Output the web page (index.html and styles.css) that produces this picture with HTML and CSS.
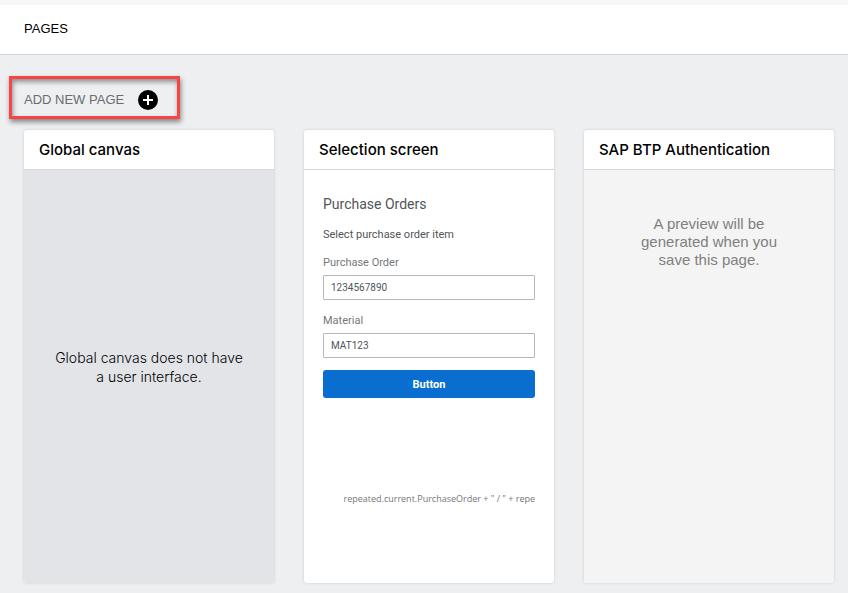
FILE: index.html
```html
<!DOCTYPE html>
<html lang="en">
<head>
<meta charset="utf-8">
<meta name="viewport" content="width=device-width, initial-scale=1">
<title>Pages</title>
<link rel="stylesheet" href="styles.css">
</head>
<body>
<header class="topbar">
  <h1 class="topbar-title">PAGES</h1>
</header>
<main class="content">
  <button class="add-page" type="button">
    <span>ADD NEW PAGE</span>
    <svg class="add-icon" viewBox="0 0 20 20" aria-hidden="true">
      <circle cx="10" cy="10" r="10" fill="#000"/>
      <path d="M10 5v10M5 10h10" stroke="#fff" stroke-width="2"/>
    </svg>
  </button>
  <div class="pages">
    <article class="page-card">
      <h2 class="card-title">Global canvas</h2>
      <div class="card-body canvas">
        <p class="canvas-note">Global canvas does not have a user interface.</p>
      </div>
    </article>
    <article class="page-card">
      <h2 class="card-title">Selection screen</h2>
      <div class="card-body screen">
        <h3 class="screen-title">Purchase Orders</h3>
        <p class="screen-text">Select purchase order item</p>
        <label class="field-label" for="order">Purchase Order</label>
        <input class="field" id="order" type="text" value="1234567890">
        <label class="field-label" for="material">Material</label>
        <input class="field" id="material" type="text" value="MAT123">
        <button class="primary" type="button">Button</button>
        <p class="formula">repeated.current.PurchaseOrder + " / " + repe</p>
      </div>
    </article>
    <article class="page-card">
      <h2 class="card-title">SAP BTP Authentication</h2>
      <div class="card-body pending">
        <p class="pending-note">A preview will be generated when you save this page.</p>
      </div>
    </article>
  </div>
</main>
</body>
</html>
```
FILE: styles.css
```css
* {
  box-sizing: border-box;
}

body {
  margin: 0;
  min-height: 100vh;
  display: flex;
  flex-direction: column;
  background: #edeff1;
  color: #000;
  font-family: Inter, "Liberation Sans", sans-serif;
}

h1, h2, h3, p {
  margin: 0;
}

.topbar {
  padding: 14px 24px 15px;
  border-top: 5px solid #f7f7f7;
  border-bottom: 1px solid #d5d7da;
  background: #fff;
}

.topbar-title {
  font-family: "Liberation Sans", Arial, sans-serif;
  font-size: 13px;
  font-weight: 400;
  line-height: 20px;
}

.content {
  flex: 1;
  display: flex;
  flex-direction: column;
  align-items: flex-start;
  gap: 11px;
  padding: 21px 14px 10px 24px;
}

.add-page {
  display: flex;
  align-items: center;
  gap: 14px;
  margin-left: -15px;
  padding: 11px 19px 6px 12px;
  border: 3px solid #fa4343;
  background: transparent;
  box-shadow: 1px 3px 5px rgba(0, 0, 0, 0.45), inset 1px 3px 5px rgba(0, 0, 0, 0.4);
  color: #6a6d70;
  font-family: "Liberation Sans", Arial, sans-serif;
  font-size: 13px;
  line-height: 20px;
}

.add-icon {
  width: 20px;
  height: 20px;
}

.pages {
  flex: 1;
  align-self: stretch;
  display: grid;
  grid-template-columns: repeat(3, minmax(0, 1fr));
  gap: 30px;
}

.page-card {
  display: flex;
  flex-direction: column;
  overflow: hidden;
  border-radius: 3px;
  background: #fff;
  box-shadow: 0 0 3px rgba(0, 0, 0, 0.15);
}

.card-title {
  padding: 10px 15px 9px;
  border-bottom: 1px solid #d5d7da;
  font-size: 15px;
  font-weight: 500;
  line-height: 20px;
}

.card-body {
  flex: 1;
}

.canvas {
  display: flex;
  align-items: center;
  justify-content: center;
  padding: 0 28px 19px;
  background: #e3e4e8;
}

.canvas-note {
  font-size: 14px;
  font-weight: 300;
  line-height: 19px;
  text-align: center;
}

.screen {
  display: flex;
  flex-direction: column;
  padding: 24px 19px;
  color: #515559;
  font-family: Roboto, "Liberation Sans", sans-serif;
}

.screen-title {
  font-size: 14px;
  font-weight: 400;
  line-height: 20px;
}

.screen-text {
  margin: 13px 0 10px;
  font-size: 11px;
  line-height: 16px;
}

.field-label {
  margin-bottom: 2px;
  color: #74777a;
  font-size: 11px;
  line-height: 20px;
}

.field {
  width: 100%;
  height: 25px;
  margin-bottom: 11px;
  padding: 0 7px;
  border: 1px solid #b5b7b9;
  border-radius: 1px;
  background: #fff;
  color: #515559;
  font-family: inherit;
  font-size: 10px;
}

.primary {
  height: 28px;
  margin-top: 1px;
  border: 0;
  border-radius: 3px;
  background: #0a6ed1;
  color: #fff;
  font-family: inherit;
  font-size: 11px;
  font-weight: 700;
}

.formula {
  margin-top: 93px;
  color: #74777a;
  font-family: "Open Sans", "Liberation Sans", sans-serif;
  font-size: 9px;
  line-height: 16px;
  text-align: right;
  white-space: nowrap;
}

.pending {
  padding: 45px 50px;
  background: #f4f4f4;
}

.pending-note {
  color: #808080;
  font-family: "Liberation Sans", Arial, sans-serif;
  font-size: 15px;
  line-height: 18px;
  text-align: center;
}
```
